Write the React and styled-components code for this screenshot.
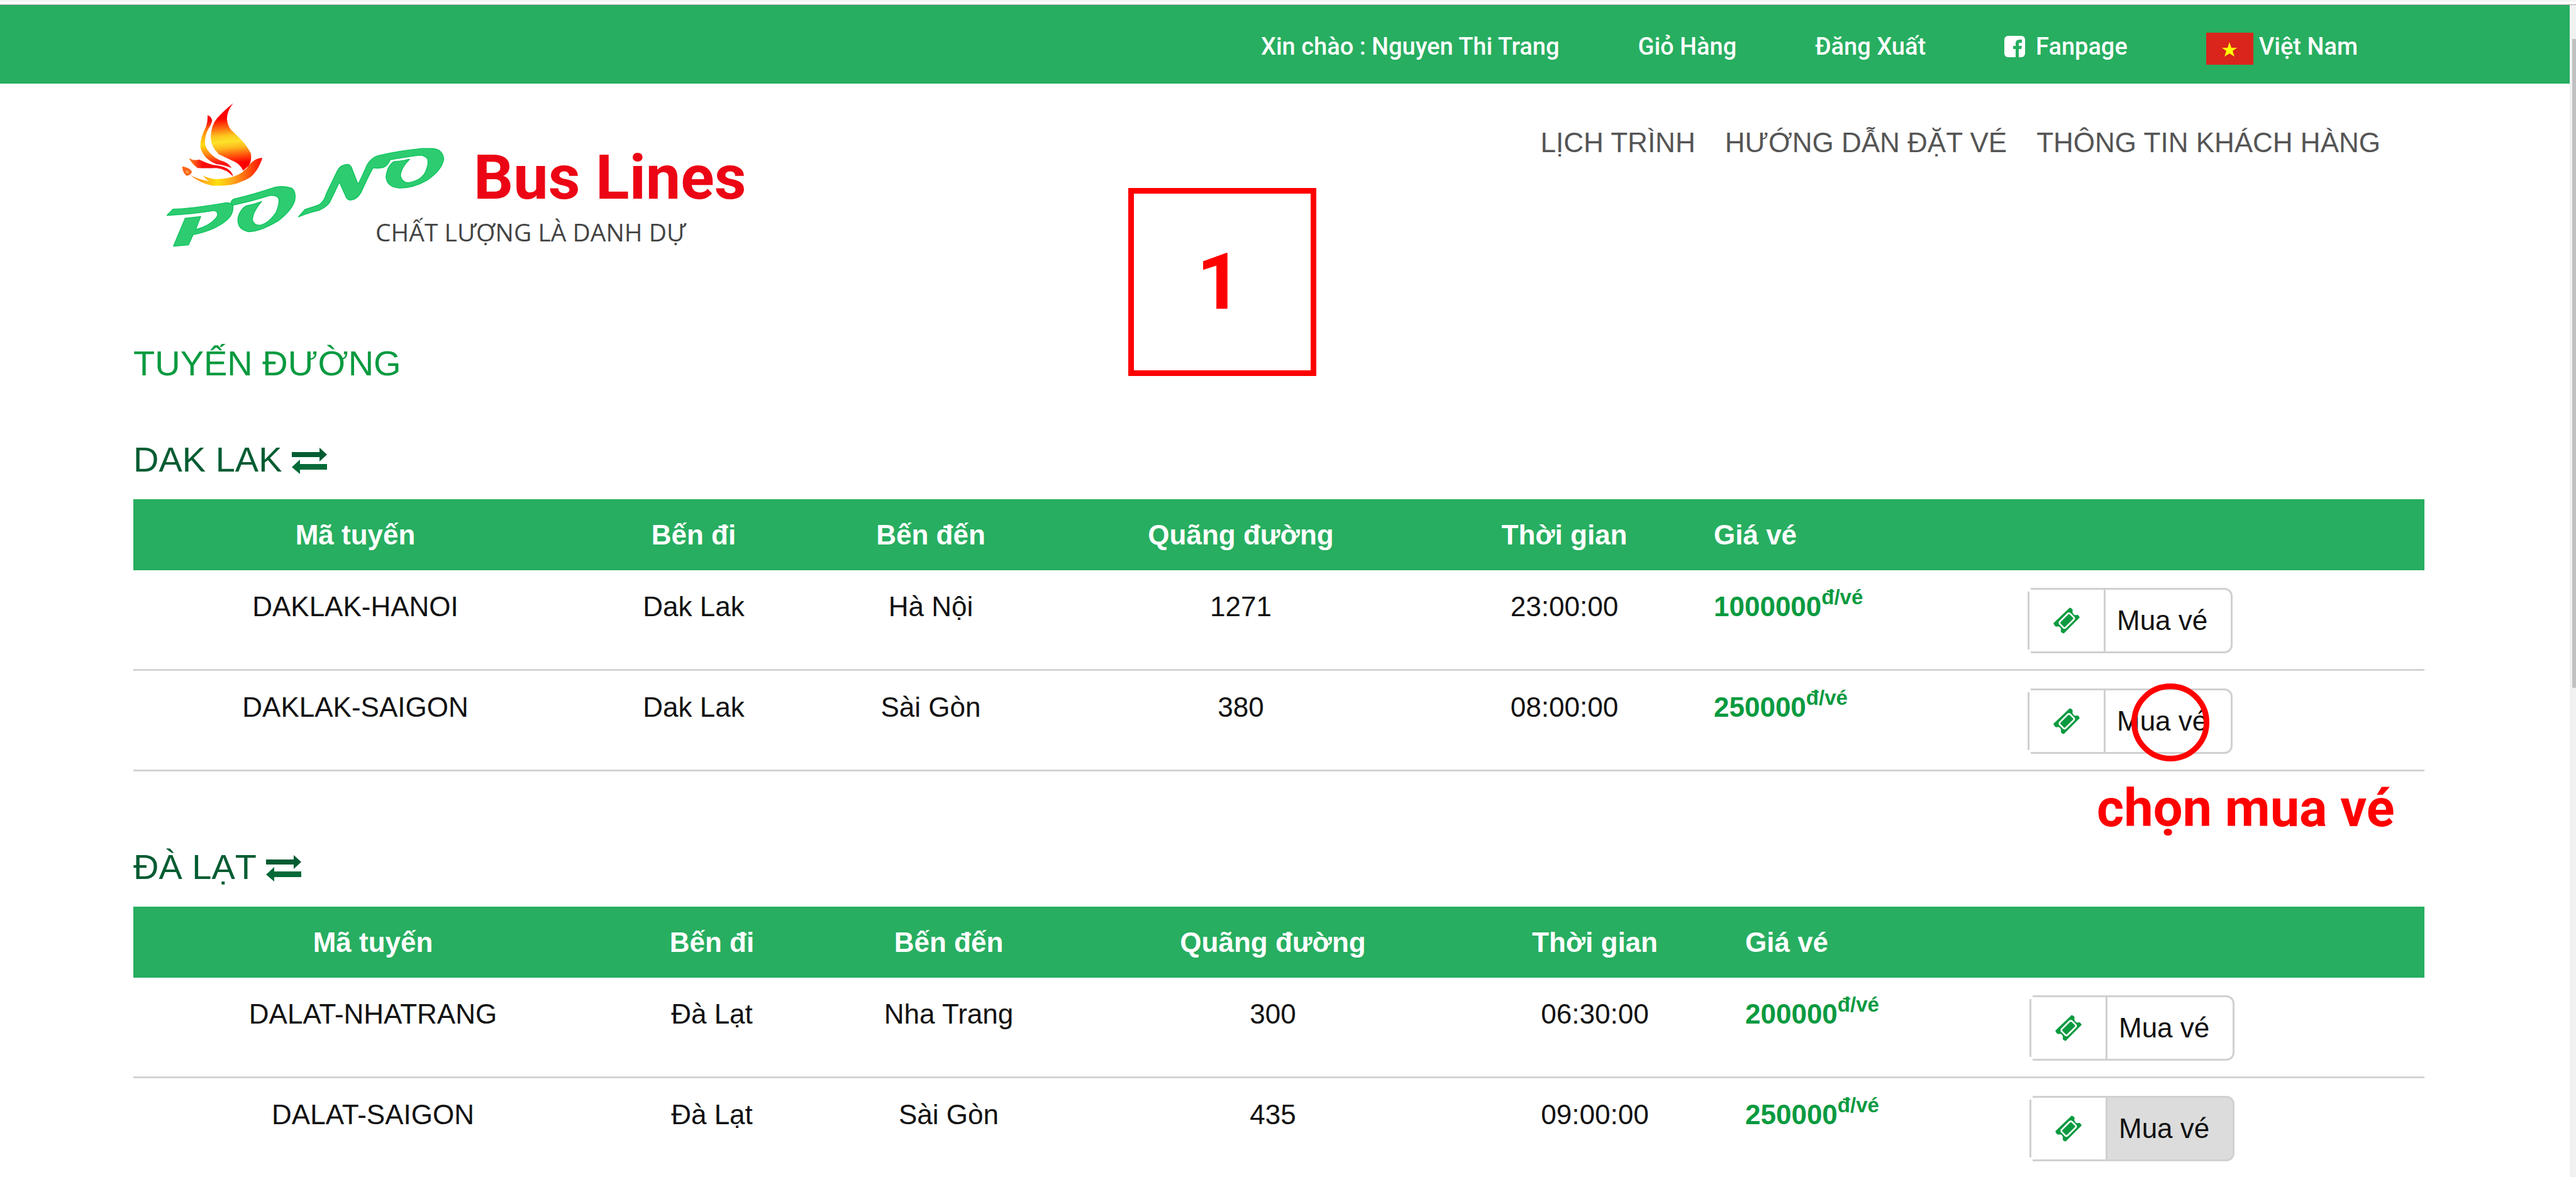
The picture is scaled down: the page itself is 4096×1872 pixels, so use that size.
import React from "react";
import styled, { createGlobalStyle } from "styled-components";

const GREEN = "#27ae60";
const SANS = '"Liberation Sans", Arial, sans-serif';
const ROBOTO = 'Roboto, "Liberation Sans", sans-serif';

const GlobalStyle = createGlobalStyle`
  *, *::before, *::after { box-sizing: border-box; }
  html, body, #root { height: 100%; }
  body {
    margin: 0;
    overflow: hidden;
    background: #fff;
    color: #111;
    font-family: ${SANS};
    font-size: 44px;
    line-height: 60px;
  }
`;

const Frame = styled.div`
  display: flex;
  flex-direction: column;
  height: 100vh;
  overflow: hidden;
`;

const WindowEdge = styled.div`
  flex: none;
  height: 8px;
  border-top: 3px solid #f2f4f3;
  border-bottom: 1px solid #a8a4a7;
`;

const Viewport = styled.div`
  flex: 1;
  min-height: 0;
  display: flex;
`;

const Page = styled.div`
  position: relative;
  flex: 1;
  min-width: 0;
  overflow: hidden;
`;

const ScrollTrack = styled.div`
  width: 10px;
  padding: 54px 0 0 4px;
  background: #f1f1f1;
`;

const ScrollThumb = styled.div`
  height: 57%;
  background: #c1c1c1;
`;

const TopBar = styled.nav`
  display: flex;
  justify-content: flex-end;
  align-items: center;
  gap: 125px;
  height: 125px;
  padding: 7px 337px 0 0;
  background: ${GREEN};
  font-family: ${ROBOTO};
  font-size: 38px;
  font-weight: 500;
  line-height: 52px;
  color: #fff;
`;

const TopLink = styled.a`
  display: flex;
  align-items: center;
  gap: ${(p) => p.$gap || 0}px;
  color: inherit;
  text-decoration: none;
  white-space: nowrap;
`;

const FlagIcon = styled.svg`
  width: 75px;
  height: 51px;
  margin-top: 7px;
`;

const FacebookIcon = styled.svg`
  width: 33px;
  height: 34px;
`;

const Masthead = styled.header`
  display: flex;
  justify-content: space-between;
  align-items: flex-start;
  padding: 21px 301px 0 252px;
`;

const Logo = styled.svg`
  display: block;
  width: 940px;
  height: 250px;
`;

const Menu = styled.nav`
  display: flex;
  gap: 47px;
  margin-top: 47px;
  line-height: 52px;
`;

const MenuLink = styled.a`
  color: #555;
  text-decoration: none;
  white-space: nowrap;
`;

const Main = styled.main`
  padding: 142px 231px 0 212px;
`;

const PageTitle = styled.h1`
  margin: 0;
  font-size: 56px;
  font-weight: 400;
  line-height: 64px;
  color: #0a9a40;
`;

const Section = styled.section`
  margin-top: ${(p) => (p.$first ? 89 : 120)}px;
`;

const SectionTitle = styled.h2`
  margin: 0 0 31px;
  font-size: 56px;
  font-weight: 400;
  line-height: 64px;
  color: #045c32;
`;

const SwapIcon = styled.svg`
  width: 56px;
  height: 42px;
  vertical-align: -4px;
`;

const RouteTable = styled.table`
  width: 100%;
  table-layout: fixed;
  border-collapse: separate;
  border-spacing: 0;
`;

const Col = styled.col`
  width: ${(p) => (p.$w ? `${p.$w}px` : "auto")};
`;

const HeadCell = styled.th`
  padding: 27px 24px 26px;
  background: ${GREEN};
  color: #fff;
  font-weight: 700;
  text-align: ${(p) => (p.$left ? "left" : "center")};
`;

const Cell = styled.td`
  padding: 28px 24px 25px;
  border-bottom: 3px solid #d3d3d3;
  vertical-align: top;
  text-align: ${(p) => (p.$left ? "left" : "center")};
`;

const Price = styled.strong`
  font-weight: 700;
  color: #0a9a40;
`;

const Unit = styled.sup`
  font-size: 33px;
  line-height: 0;
  vertical-align: 19px;
`;

const BuyGroup = styled.div`
  position: relative;
  display: flex;
  width: 326px;
  height: 104px;
`;

const TicketBox = styled.span`
  flex: none;
  display: flex;
  align-items: center;
  justify-content: center;
  width: 121px;
  border: 3px solid #d0d0d0;
  border-right: 0;
  clip-path: polygon(
    5px 0, 100% 0, 100% 100%, 5px 100%, 5px calc(100% - 6px),
    0 calc(100% - 6px), 0 6px, 5px 6px
  );
`;

const TicketIcon = styled.svg`
  width: 42px;
  height: 42px;
`;

const BuyButton = styled.button`
  flex: 1;
  padding: 0 18px;
  border: 3px solid #d0d0d0;
  border-radius: 0 13px 13px 0;
  background: ${(p) => (p.$active ? "#dcdcdc" : "#fff")};
  color: #111;
  font: inherit;
  text-align: left;
  white-space: nowrap;
`;

const StepBox = styled.div`
  position: absolute;
  top: 291px;
  left: 1794px;
  display: flex;
  align-items: center;
  justify-content: center;
  width: 299px;
  height: 299px;
  padding-right: 10px;
  border: 9px solid #f00;
  color: #f00;
  font: 700 125px ${ROBOTO};
`;

const Ring = styled.span`
  position: absolute;
  top: -8px;
  left: 165px;
  width: 124px;
  height: 124px;
  border: 9px solid #f00;
  border-radius: 50%;
  pointer-events: none;
`;

const Caption = styled.span`
  position: absolute;
  top: 143px;
  left: 110px;
  font: 700 83px/96px ${ROBOTO};
  color: #f00;
  white-space: nowrap;
`;

const HEADINGS = ["Mã tuyến", "Bến đi", "Bến đến", "Quãng đường", "Thời gian", "Giá vé", ""];

const SECTIONS = [
  {
    name: "DAK LAK",
    columns: [706, 370, 384, 602, 427, 499, 0],
    rows: [
      { code: "DAKLAK-HANOI", from: "Dak Lak", to: "Hà Nội", km: "1271", time: "23:00:00", price: "1000000" },
      { code: "DAKLAK-SAIGON", from: "Dak Lak", to: "Sài Gòn", km: "380", time: "08:00:00", price: "250000", marked: true },
    ],
  },
  {
    name: "ĐÀ LẠT",
    columns: [762, 316, 437, 594, 430, 452, 0],
    rows: [
      { code: "DALAT-NHATRANG", from: "Đà Lạt", to: "Nha Trang", km: "300", time: "06:30:00", price: "200000" },
      { code: "DALAT-SAIGON", from: "Đà Lạt", to: "Sài Gòn", km: "435", time: "09:00:00", price: "250000", active: true },
    ],
  },
];

function BrandLogo() {
  return (
    <Logo viewBox="0 0 940 250" role="img" aria-label="PONO Bus Lines">
      <defs>
        <linearGradient id="flame" gradientUnits="userSpaceOnUse" x1="400" y1="38" x2="440" y2="430">
          <stop offset="0.22" stopColor="#ff0000" />
          <stop offset="0.4" stopColor="#fd8a14" />
          <stop offset="0.48" stopColor="#fcc81f" />
          <stop offset="0.57" stopColor="#fde22a" />
          <stop offset="0.66" stopColor="#fdbb1e" />
          <stop offset="0.76" stopColor="#ff6a10" />
          <stop offset="0.9" stopColor="#ff0000" />
        </linearGradient>
        <linearGradient id="wisp" gradientUnits="userSpaceOnUse" x1="280" y1="108" x2="310" y2="418">
          <stop offset="0.12" stopColor="#f50a0a" />
          <stop offset="0.3" stopColor="#ff8a10" />
          <stop offset="0.55" stopColor="#ffdc10" />
          <stop offset="0.75" stopColor="#ff8010" />
          <stop offset="0.92" stopColor="#fa1414" />
        </linearGradient>
        <linearGradient id="bowl" gradientUnits="userSpaceOnUse" x1="185" y1="0" x2="610" y2="0">
          <stop offset="0" stopColor="#ff7a1a" />
          <stop offset="0.38" stopColor="#ffdf10" />
          <stop offset="0.6" stopColor="#fda51c" />
          <stop offset="0.8" stopColor="#ff5a0c" />
          <stop offset="1" stopColor="#ff0a05" />
        </linearGradient>
        <linearGradient id="leaf" gradientUnits="userSpaceOnUse" x1="178" y1="0" x2="260" y2="0">
          <stop offset="0" stopColor="#ff8a20" />
          <stop offset="1" stopColor="#fa0a0a" />
        </linearGradient>
      </defs>
      <g transform="scale(0.2708)">
        <path fill="url(#flame)" d="M438 38Q402 85 402 130Q405 180 445 212Q520 280 543 335Q548 375 532 403L497 434Q480 395 440 378Q380 350 355 338Q305 290 307 235Q310 165 345 125Q385 80 438 38Z" />
        <path fill="url(#wisp)" d="M288 108Q311 115 315 140Q310 165 292 190Q266 240 276 290Q300 345 360 372Q410 385 430 418Q390 402 340 395Q270 370 248 305Q240 260 270 195Q290 160 288 108Z" />
        <path fill="url(#leaf)" d="M178 358Q205 378 240 368Q270 385 320 400Q425 408 438 467Q400 425 340 418Q280 420 230 418Q196 395 178 358Z" />
        <path fill="url(#bowl)" d="M610 358Q560 362 535 400Q500 450 440 468Q390 485 320 482Q280 475 262 462Q275 485 300 496Q240 488 186 460Q245 508 315 522Q430 528 490 497Q540 480 562 450Q595 410 610 358Z" />
        <path fill="#ff6416" d="M139 409Q180 413 197 440Q187 462 165 463Q143 450 139 409Z" />
        <path fill="#ff9a4a" d="M158 432Q174 432 180 441Q176 451 167 450Q158 445 158 432Z" />
        <g fill="#2ecc71" stroke="#0cc45c" strokeWidth="5" strokeLinejoin="round">
          <path d="M50 696L85 660Q190 658 400 622Q425 622 437 640Q442 690 400 725Q330 785 203 810L176 870L88 877L157 713L248 703L218 780Q300 760 340 710Q360 675 325 668Q200 690 50 696Z" />
          <path d="M425 627Q425 608 445 600Q560 572 680 532Q740 520 785 538Q810 560 800 610Q780 670 700 730Q600 790 530 792Q460 780 467 710Q480 660 515 640Q560 632 605 615Q550 680 552 725Q560 756 600 754Q650 740 690 680Q715 620 705 595Q690 575 650 580Q560 610 437 636Z" />
          <path d="M822 705L860 662Q900 650 945 633Q975 610 985 570L1050 435Q1070 398 1110 397Q1130 400 1137 425L1172 514Q1190 480 1225 400Q1255 350 1300 343Q1420 315 1550 303L1611 303Q1670 310 1675 365Q1665 430 1577 490Q1500 535 1416 536Q1340 530 1336 470Q1345 400 1385 380Q1430 378 1475 366Q1420 420 1421 465Q1430 505 1470 505Q1530 495 1560 455Q1590 400 1580 365Q1565 343 1530 343Q1440 355 1360 370Q1350 400 1320 415Q1290 422 1260 417Q1230 470 1190 560Q1165 605 1125 607Q1105 600 1100 585L1062 500Q1035 560 1005 620Q980 655 930 670Q880 682 822 705Z" />
        </g>
      </g>
      <text x="501" y="162" fill="#ec0514" fontFamily={ROBOTO} fontWeight="700" fontSize="99">
        Bus Lines
      </text>
      <text x="345" y="230" fill="#444" fontFamily='"Open Sans", sans-serif' fontSize="39">
        CHẤT LƯỢNG LÀ DANH DỰ
      </text>
    </Logo>
  );
}

function Ticket() {
  return (
    <TicketIcon viewBox="203 208 157 154" aria-hidden="true">
      <path fill="#0a9a40" d="M300 208Q318 214 318 224Q312 240 326 250Q336 254 346 250Q354 254 360 266L265 362Q250 360 247 348Q252 332 240 322Q230 317 219 321Q208 316 203 301Z" />
      <path fill="#0a9a40" stroke="#fff" strokeWidth="10" strokeLinejoin="round" d="M239 294L289 244Q297 238 304 246L324 266Q330 274 323 280L275 327Q268 332 261 325L240 303Z" />
    </TicketIcon>
  );
}

function Swap() {
  return (
    <SwapIcon viewBox="0 0 56 42" aria-hidden="true">
      <path fill="#045c32" d="M0 7H44V0L56 11L44 22V15H0Z" />
      <path fill="#046b38" d="M56 26H13V19L0 31L13 42V35H56Z" />
    </SwapIcon>
  );
}

function RouteSection({ section, first }) {
  return (
    <Section $first={first}>
      <SectionTitle>
        {section.name} <Swap />
      </SectionTitle>
      <RouteTable>
        <colgroup>
          {section.columns.map((w, i) => (
            <Col key={i} $w={w} />
          ))}
        </colgroup>
        <thead>
          <tr>
            {HEADINGS.map((h, i) => (
              <HeadCell key={i} $left={i > 4}>{h}</HeadCell>
            ))}
          </tr>
        </thead>
        <tbody>
          {section.rows.map((r) => (
            <tr key={r.code}>
              <Cell>{r.code}</Cell>
              <Cell>{r.from}</Cell>
              <Cell>{r.to}</Cell>
              <Cell>{r.km}</Cell>
              <Cell>{r.time}</Cell>
              <Cell $left>
                <Price>{r.price}<Unit>đ/vé</Unit></Price>
              </Cell>
              <Cell $left>
                <BuyGroup>
                  <TicketBox><Ticket /></TicketBox>
                  <BuyButton type="button" $active={r.active}>Mua vé</BuyButton>
                  {r.marked && <Ring />}
                  {r.marked && <Caption>chọn mua vé</Caption>}
                </BuyGroup>
              </Cell>
            </tr>
          ))}
        </tbody>
      </RouteTable>
    </Section>
  );
}

export default function App() {
  return (
    <Frame>
      <GlobalStyle />
      <WindowEdge />
      <Viewport>
        <Page>
          <TopBar>
            <span>Xin chào : Nguyen Thi Trang</span>
            <TopLink href="#cart">Giỏ Hàng</TopLink>
            <TopLink href="#logout">Đăng Xuất</TopLink>
            <TopLink href="#fanpage" $gap={17}>
              <FacebookIcon viewBox="0 0 33 34" aria-hidden="true">
                <rect width="33" height="34" rx="6" fill="#fff" />
                <path fill={GREEN} d="M18 34V21H14V16H18V12Q18 6 24 6H28V11H25Q23 11 23 13V16H28L27 21H23V34Z" />
              </FacebookIcon>
              Fanpage
            </TopLink>
            <TopLink href="#language" $gap={9}>
              <FlagIcon viewBox="0 0 75 51" aria-hidden="true">
                <rect width="75" height="51" fill="#da251d" />
                <path fill="#ff0" d="M37 15L40 24H49L42 29L45 38L37 33L29 38L32 29L25 24H34Z" />
              </FlagIcon>
              Việt Nam
            </TopLink>
          </TopBar>
          <Masthead>
            <BrandLogo />
            <Menu>
              <MenuLink href="#schedule">LỊCH TRÌNH</MenuLink>
              <MenuLink href="#guide">HƯỚNG DẪN ĐẶT VÉ</MenuLink>
              <MenuLink href="#customer">THÔNG TIN KHÁCH HÀNG</MenuLink>
            </Menu>
          </Masthead>
          <Main>
            <PageTitle>TUYẾN ĐƯỜNG</PageTitle>
            {SECTIONS.map((s, i) => (
              <RouteSection key={s.name} section={s} first={i === 0} />
            ))}
          </Main>
          <StepBox>1</StepBox>
        </Page>
        <ScrollTrack>
          <ScrollThumb />
        </ScrollTrack>
      </Viewport>
    </Frame>
  );
}
